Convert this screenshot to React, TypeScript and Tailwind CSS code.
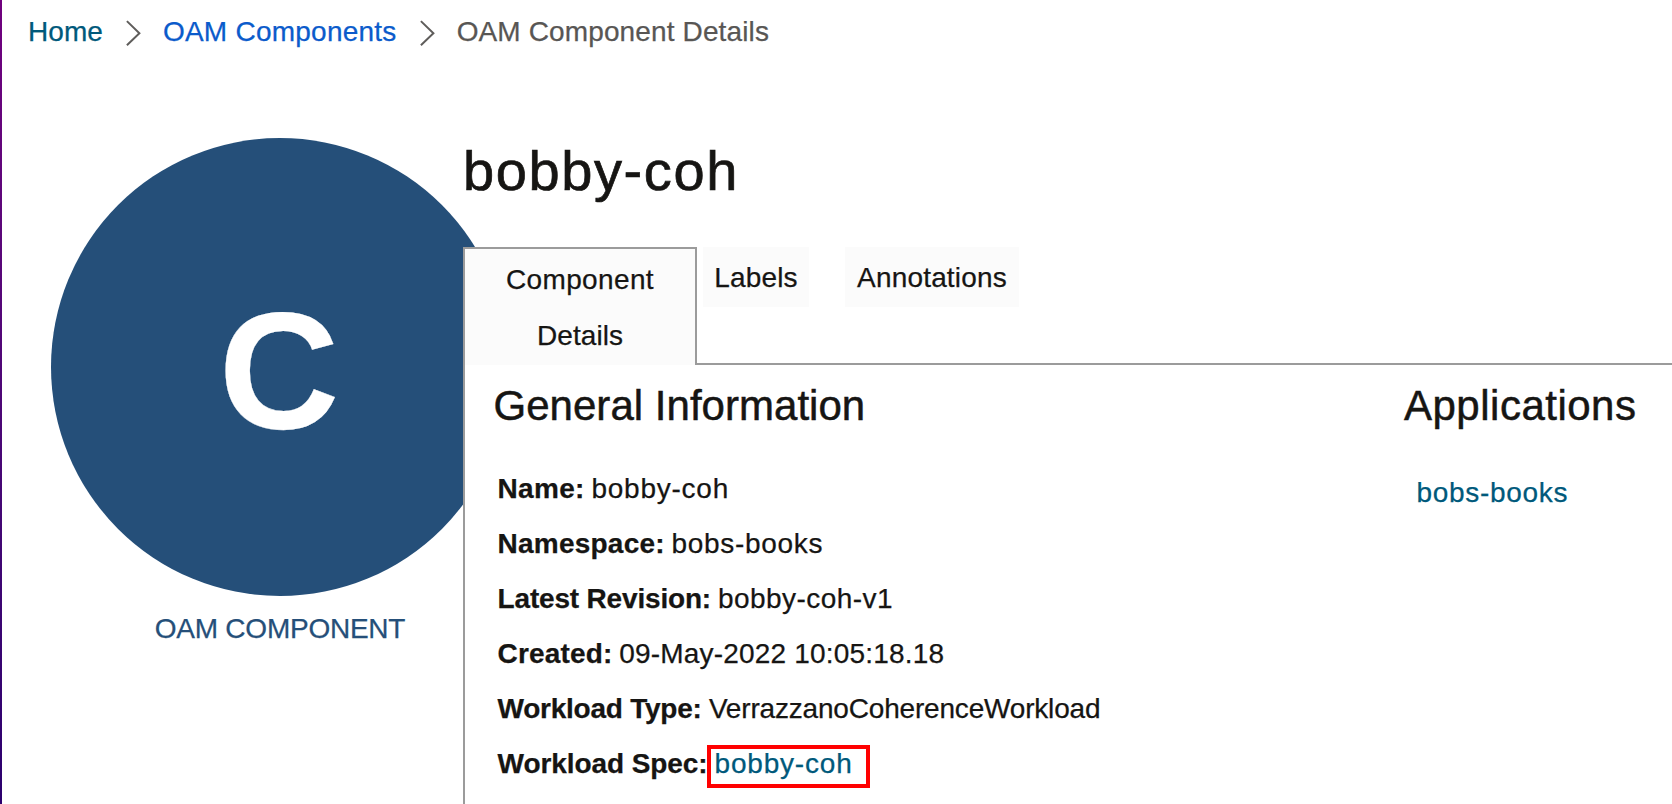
function Chevron({ className }: { className: string }) {
  return (
    <svg viewBox="0 0 15 28" className={`h-7 w-[15px] shrink-0 ${className}`} fill="none" stroke="#5f5d5b" strokeWidth="2">
      <path d="M0.9 2.1 13.4 14.2 0.9 26.3" />
    </svg>
  );
}

const rows = [
  { label: 'Name:', value: 'bobby-coh', ls: 'tracking-[0.3px]', vs: 'tracking-[0.76px] -ml-[0.3px]' },
  { label: 'Namespace:', value: 'bobs-books', ls: 'tracking-[0.22px]', vs: 'tracking-[0.69px] -ml-[0.3px]' },
  { label: 'Latest Revision:', value: 'bobby-coh-v1', ls: 'tracking-[-0.18px]', vs: 'tracking-[0.44px]' },
  { label: 'Created:', value: '09-May-2022 10:05:18.18', ls: 'tracking-[0.16px]', vs: 'tracking-[0.19px] -ml-[0.3px]' },
  { label: 'Workload Type:', value: 'VerrazzanoCoherenceWorkload', ls: 'tracking-[-0.25px]', vs: 'tracking-[-0.185px] ml-[0.4px]' },
];

export default function App() {
  return (
    <div className="flex h-[804px] w-full overflow-hidden bg-white font-['Liberation_Sans',Arial,sans-serif] text-[28px] text-[#161513] [-webkit-text-stroke:0.25px_currentColor]">
      <div className="w-0.5 shrink-0 bg-linear-to-b from-[#70007e] to-[#2c006e]" />
      <div className="flex min-w-0 flex-1 flex-col">
        <nav className="flex h-[62px] shrink-0 items-center pt-px pl-[26px] leading-[61px] whitespace-nowrap">
          <a className="tracking-[0.06px] text-[#00597b]">Home</a>
          <Chevron className="mt-[3px] ml-[23px]" />
          <a className="ml-[22px] tracking-[0.24px] text-[#0b5bcb]">OAM Components</a>
          <Chevron className="mt-[3px] ml-[23px]" />
          <span className="ml-[22px] tracking-[0.13px] text-[#585654]">OAM Component Details</span>
        </nav>

        <div className="flex min-h-0 flex-1">
          <aside className="w-[461px] shrink-0 pt-[75.5px] pl-[49px]">
            <div className="flex w-[458px] flex-col items-center">
              <div className="flex size-[458px] items-center justify-center rounded-full bg-[#254f79] text-[167px] leading-none font-bold text-white">
                <span className="pt-[7px] pr-[2px]">C</span>
              </div>
              <div className="mt-[13px] leading-10 tracking-[-0.24px] text-[#254f79]">OAM COMPONENT</div>
            </div>
          </aside>

          <main className="z-10 flex min-w-0 flex-1 flex-col pt-[77px]">
            <h1 className="text-[56px] leading-[64px] tracking-[1.6px] [-webkit-text-stroke-width:0.7px]">bobby-coh</h1>

            <div className="mt-[44px] flex h-[118px] shrink-0 text-center">
              <div className="w-[234px] shrink-0 border-2 border-b-0 border-[#9b9b9b] bg-[#fbfbfb] pt-[3px] leading-[56px]">
                <div className="tracking-[0.35px]">Component</div>
                <div className="tracking-[0.05px]">Details</div>
              </div>
              <div className="flex flex-1 items-start gap-9 border-b-2 border-[#9b9b9b] pl-[6px] leading-[59px]">
                <div className="w-[106px] bg-[#fbfbfb] pt-px tracking-[0.18px]">Labels</div>
                <div className="w-[174px] bg-[#fbfbfb] pt-px tracking-[0.17px]">Annotations</div>
              </div>
            </div>

            <div className="flex flex-1 border-l-2 border-[#9b9b9b] bg-white pt-[13px] pl-7 whitespace-nowrap">
              <section className="w-[911px] shrink-0">
                <h2 className="pl-[0.5px] text-[42px] leading-[56px] tracking-[0.03px] [-webkit-text-stroke-width:0.5px]">General Information</h2>
                <div className="mt-[27px] pl-[4.6px] leading-[55px]">
                  {rows.map((r) => (
                    <div key={r.label} className="flex gap-[7px]">
                      <span className={`font-bold ${r.ls}`}>{r.label}</span>
                      <span className={r.vs}>{r.value}</span>
                    </div>
                  ))}
                  <div className="flex gap-[7px]">
                    <span className="font-bold tracking-[-0.08px]">Workload Spec:</span>
                    <span className="relative tracking-[0.8px] text-[#00597b]">
                      bobby-coh
                      <span className="absolute top-[9px] -left-[8px] h-[43px] w-[163px] border-4 border-[#ff0000]" />
                    </span>
                  </div>
                </div>
              </section>
              <section>
                <h2 className="text-[42px] leading-[56px] tracking-[0.5px] [-webkit-text-stroke-width:0.5px]">Applications</h2>
                <a className="mt-[31px] block pl-[12.5px] leading-[56px] tracking-[0.7px] text-[#00597b]">bobs-books</a>
              </section>
            </div>
          </main>
        </div>
      </div>
    </div>
  );
}
